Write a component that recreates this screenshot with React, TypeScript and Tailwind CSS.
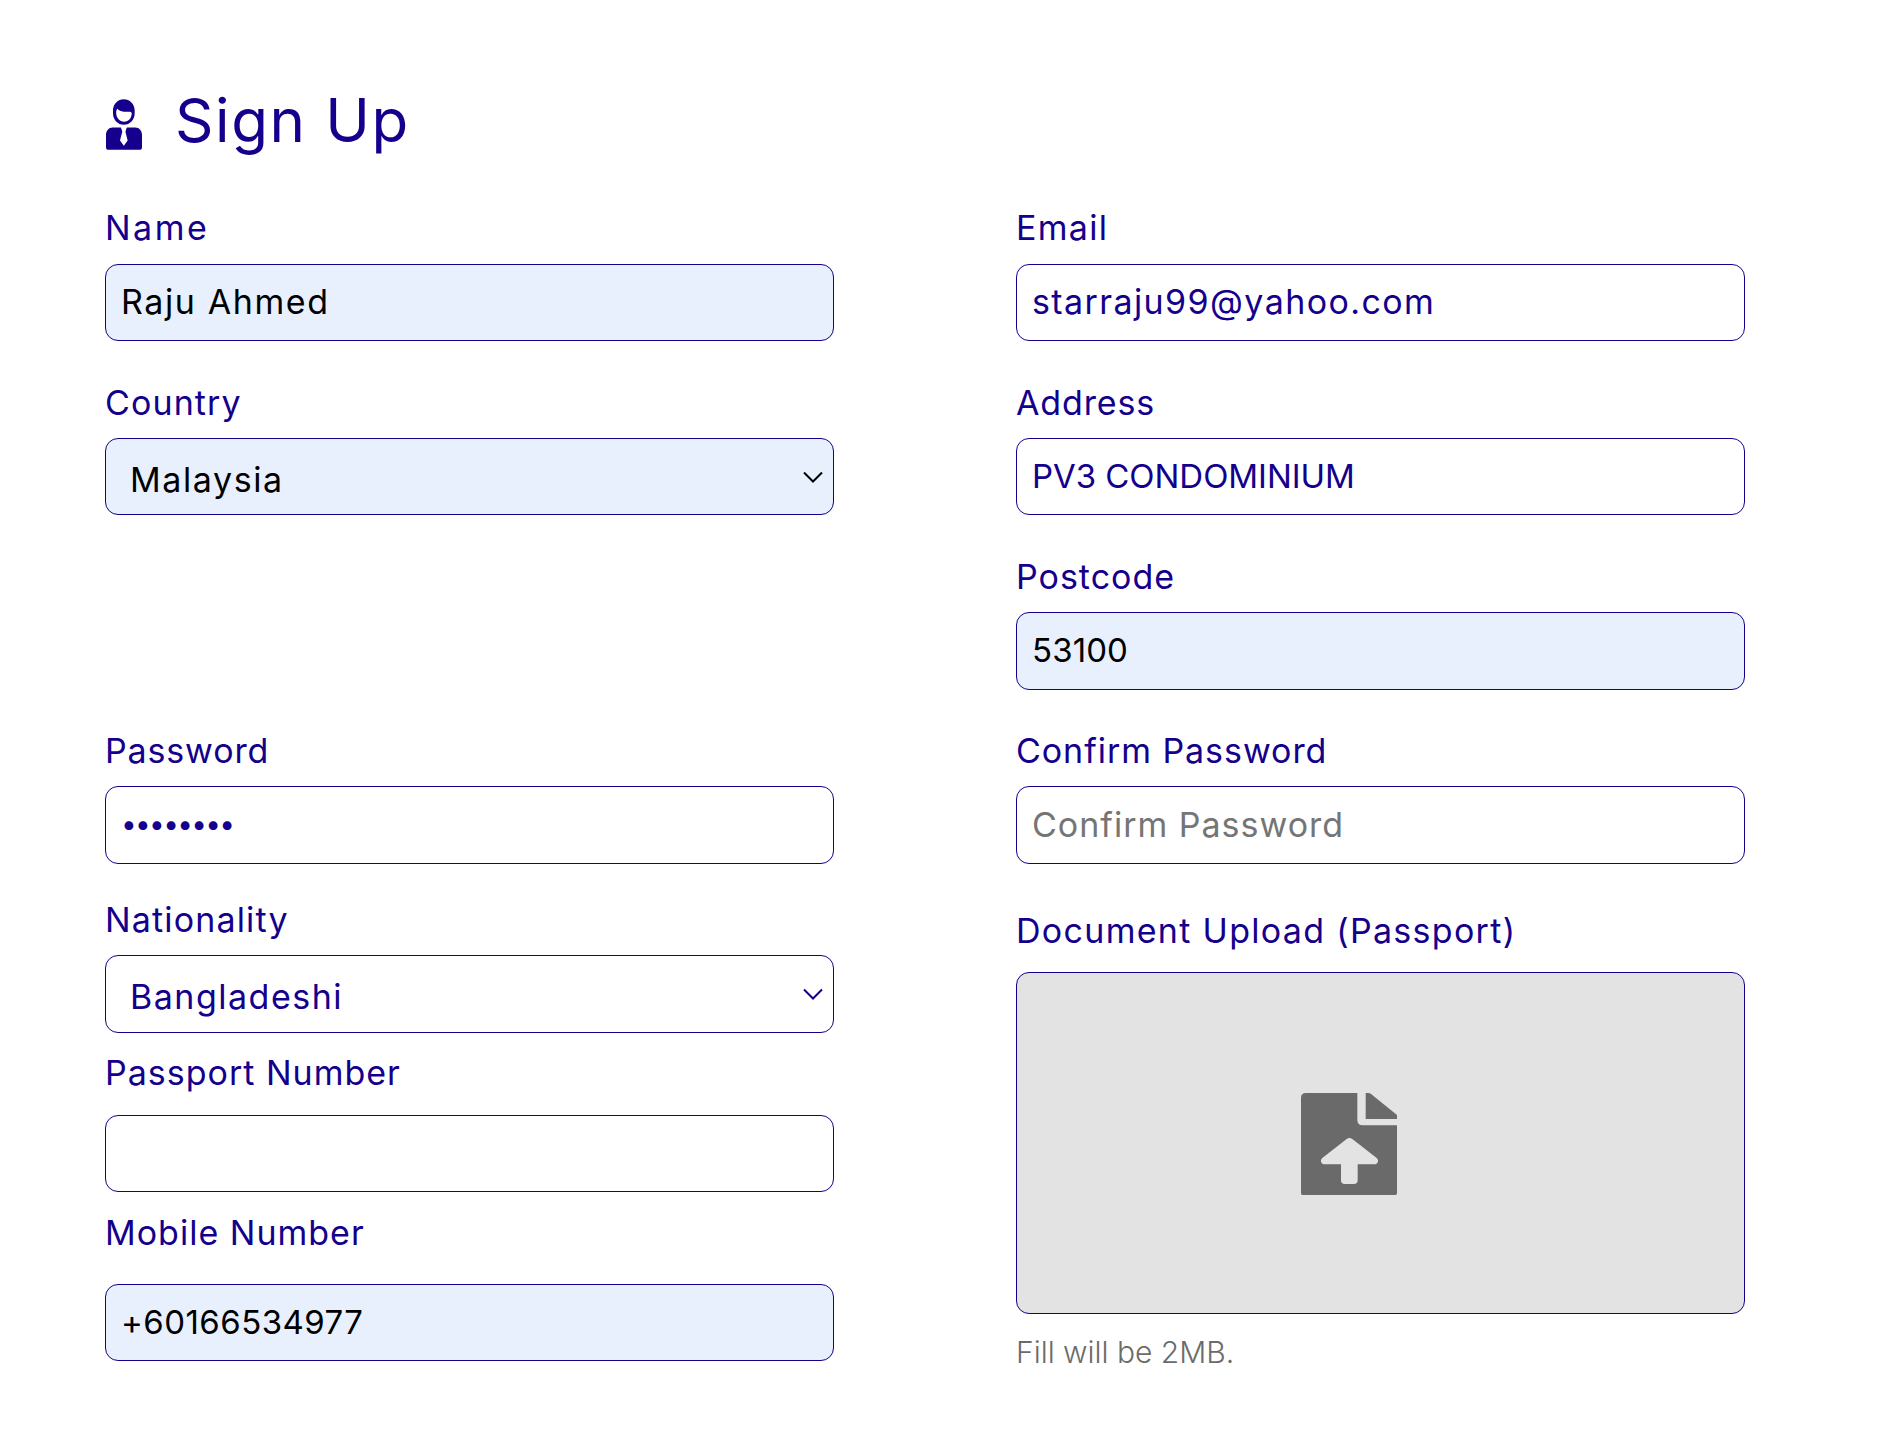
import type { ReactNode } from 'react';

function Label({ children, className = '' }: { children: ReactNode; className?: string }) {
  return (
    <div className={`h-10 whitespace-nowrap text-[34px] leading-10 font-normal text-[#14008c] ${className}`}>
      {children}
    </div>
  );
}

function Box({ children, className = '' }: { children?: ReactNode; className?: string }) {
  return (
    <div
      className={`flex items-start whitespace-nowrap rounded-[13px] border border-[#14008c] pt-[17px] leading-10 font-normal ${className}`}
    >
      {children}
    </div>
  );
}

function Chevron() {
  return (
    <svg viewBox="0 0 20 12" className="mt-[15px] mr-2.5 ml-auto h-3 w-5" fill="none" stroke="currentColor" strokeWidth="2">
      <path d="M1 1.500 10 10.500 19 1.500" />
    </svg>
  );
}

function PersonIcon() {
  return (
    <svg viewBox="48 56 108 152" className="mt-[13px] h-[51px] w-9 shrink-0" fill="#14008c">
      <path
        fillRule="evenodd"
        d="M101.500 56.500C119 56.500 134 71 134 90V98C134 118 120 132.500 101.500 132.500C83 132.500 69 118 69 98V90C69 71 84 56.500 101.500 56.500ZM82 85C78 90 78 96 79 102C81 114 90 123.500 102 123.500C114 123.500 124 114 125 101C125.500 97 124 93.500 120 93.500L101 93.500C93 93 86 90 82 85Z"
      />
      <path
        fillRule="evenodd"
        d="M68 141H93L97 153L90 180L101.500 196L113 180L106 153L110 141H136C148 141 156 151 156 163V200Q156 208 148 208H56Q48 208 48 200V163C48 151 56 141 68 141Z"
      />
      <path d="M93 139L101.500 145L110 139L106 154H98Z" fill="white" />
    </svg>
  );
}

function UploadIcon() {
  return (
    <svg viewBox="63 69 288 306" className="h-[102px] w-24" fill="#6a6a6a">
      <path
        fillRule="evenodd"
        d="M78 69H232V150Q232 166 248 166H351V370Q351 375 346 375H68Q63 375 63 370V84Q63 69 78 69ZM199 208L127 264C119 271 123 283 135 283H183V331Q183 342 194 342H222Q233 342 233 331V283H282C294 283 298 271 290 264L218 208Q208 200 199 208Z"
      />
      <path d="M257 69H264Q269 69 274 73L351 135V147H257Z" />
    </svg>
  );
}

export default function App() {
  return (
    <div className="h-[1435px] w-[1885px] overflow-hidden bg-white pt-[86px] pl-[105px] font-['Inter',sans-serif]">
      <header className="flex h-[122px] items-start pl-px">
        <PersonIcon />
        <h1 className="ml-[33px] text-[60px] leading-[69px] font-normal tracking-[1.6px] text-[#14008c]">Sign Up</h1>
      </header>

      <main className="flex gap-[182px]">
        <section className="flex w-[729px] flex-col">
          <Label className="tracking-[2.5px]">Name</Label>
          <Box className="mt-4 h-[77px] bg-[#e8f0fe] pl-[15px] text-[34px] tracking-[1.6px] text-black">Raju Ahmed</Box>

          <Label className="mt-[42px] tracking-[1.1px]">Country</Label>
          <Box className="mt-[15px] h-[77px] bg-[#e8f0fe] pl-6 text-[34px] text-black">
            <span className="mt-1 tracking-[1.6px]">Malaysia</span>
            <Chevron />
          </Box>

          <Label className="mt-[216px] tracking-[0.85px]">Password</Label>
          <Box className="mt-[15px] h-[78px] pl-[15px] text-[28px] text-[#14008c]">
            <span className="tracking-[-1.7px]">••••••••</span>
          </Box>

          <Label className="mt-9 tracking-[1.15px]">Nationality</Label>
          <Box className="mt-[15px] h-[78px] pl-6 text-[34px] text-[#14008c]">
            <span className="mt-1 h-10 overflow-hidden tracking-[1.5px]">Bangladeshi</span>
            <Chevron />
          </Box>

          <Label className="mt-5 tracking-[1px]">Passport Number</Label>
          <Box className="mt-[22px] h-[77px]" />

          <Label className="mt-[21px] tracking-[1px]">Mobile Number</Label>
          <Box className="mt-[31px] h-[77px] bg-[#e8f0fe] pl-[15px] text-[33px] tracking-[0.45px] text-black">+60166534977</Box>
        </section>

        <section className="flex w-[729px] flex-col">
          <Label className="tracking-[1.3px]">Email</Label>
          <Box className="mt-4 h-[77px] pl-[15px] text-[34px] tracking-[1.4px] text-[#14008c]">starraju99@yahoo.com</Box>

          <Label className="mt-[42px] tracking-[0.85px]">Address</Label>
          <Box className="mt-[15px] h-[77px] pl-[15px] text-[33px] tracking-[-0.05px] text-[#14008c]">PV3 CONDOMINIUM</Box>

          <Label className="mt-[42px] tracking-[1px]">Postcode</Label>
          <Box className="mt-[15px] h-[78px] bg-[#e8f0fe] pl-[15px] text-[33px] tracking-[0.1px] text-black">53100</Box>

          <Label className="mt-[41px] tracking-[0.95px]">Confirm Password</Label>
          <Box className="mt-[15px] h-[78px] pl-[15px] text-[34px] text-[#757575]">
            <span className="mt-px tracking-[1px]">Confirm Password</span>
          </Box>

          <Label className="mt-[47px] tracking-[1.3px]">Document Upload (Passport)</Label>
          <div className="mt-[21px] h-[342px] rounded-[13px] border border-[#14008c] bg-[#e3e3e3] pt-[120px] pl-[284px]">
            <UploadIcon />
          </div>
          <p className="mt-5 text-[30px] leading-9 font-light text-[#6b6b6b]">Fill will be 2MB.</p>
        </section>
      </main>
    </div>
  );
}
